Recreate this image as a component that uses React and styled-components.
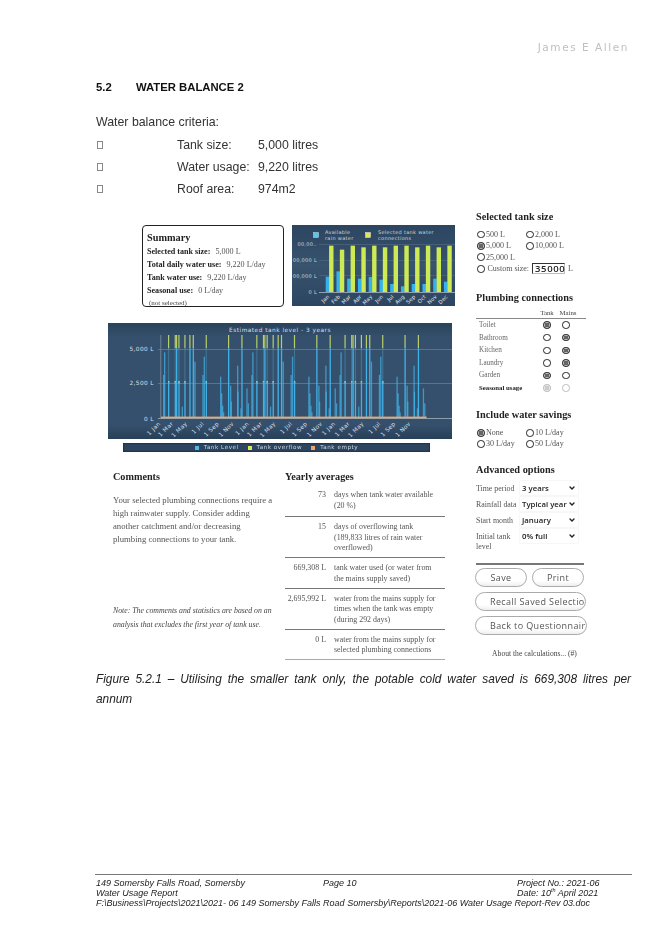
import React from "react";
import styled, { createGlobalStyle } from "styled-components";
import { ChevronDown } from "lucide-react";

const Global = createGlobalStyle`
  html, body { margin: 0; padding: 0; background: #fff; }
  * { box-sizing: border-box; }
`;

const Sheet = styled.div`
  width: 670px; height: 947px; overflow: hidden; background: #fff;
  display: flex; flex-direction: column;
  font-family: "Liberation Sans", Arial, sans-serif; color: #222;
`;
const Brand = styled.header`
  margin-top: 41px; padding-right: 41px; text-align: right;
  font: 10.5px/12px "DejaVu Sans", sans-serif; letter-spacing: 1.55px; color: #c0c0c0;
  filter: blur(.35px);
`;
const Heading = styled.h2`
  margin: 28px 0 0 96px; display: flex; font-size: 11.3px; line-height: 12px; font-weight: 700; color: #111;
  filter: blur(.25px);
  span:first-child { width: 40px; }
`;
const Criteria = styled.p`
  margin: 22px 0 0 96px; font-size: 12.35px; line-height: 14px; color: #333; filter: blur(.25px);
`;
const BulletList = styled.ul`
  list-style: none; margin: 5px 0 0 96px; padding: 0; filter: blur(.25px);
`;
const BulletRow = styled.li`
  height: 22px; display: flex; align-items: center; font-size: 12.3px; color: #333;
`;
const BulletBox = styled.i`
  width: 6px; height: 8px; border: 1px solid #888; margin-left: 1px; margin-right: 74px;
`;
const BulletKey = styled.span`width: 81px;`;

const Figure = styled.section`
  height: 469px; margin-left: 108px; display: grid; grid-template-columns: 368px 120px;
  font-family: "Liberation Serif", "Times New Roman", serif; color: #444;
  filter: blur(.6px);
`;
const LeftCol = styled.div`padding-top: 25px;`;
const TopRow = styled.div`
  margin-left: 34px; height: 84px; display: flex; gap: 8px; align-items: flex-start;
`;
const SummaryCard = styled.div`
  width: 142px; height: 82px; overflow: hidden; border: 1.5px solid #222; border-radius: 4px;
  padding: 4px 0 0 4px; background: #fff;
`;
const SummaryTitle = styled.div`
  font-size: 10.3px; line-height: 15px; font-weight: 700; color: #222;
`;
const SummaryLine = styled.div`
  font-size: 8.1px; line-height: 13px; white-space: nowrap; color: #555;
  b { color: #222; margin-right: 3px; }
`;
const SummaryNote = styled.div`
  font-size: 7px; line-height: 13px; margin-left: 2px; color: #444;
`;
const Svg = styled.svg`display: block; flex: none;`;
const BigChart = styled(Svg)`margin-top: 14px;`;
const Legend = styled.div`
  margin: 4px 0 0 15px; width: 307px; height: 9px; background: #2d4560;
  box-shadow: inset 0 0 2px #111; display: flex; align-items: center; justify-content: center; gap: 9px;
  font: 5.6px/9px "DejaVu Sans", sans-serif; letter-spacing: .55px; color: #d0d8e0;
`;
const LegendItem = styled.span`
  display: flex; align-items: center; gap: 5px;
  &::before { content: ""; width: 4px; height: 4px; background: ${p => p.$color}; }
`;
const Bottom = styled.div`
  margin: 19px 0 0 5px; display: grid; grid-template-columns: 172px 160px;
`;
const Title = styled.h3`
  margin: 0; font-size: 10.2px; line-height: 12px; font-weight: 700; color: #222; white-space: nowrap;
`;
const Para = styled.p`
  margin: 11px 0 0; width: 161px; font-size: 8.7px; line-height: 13px; color: #555;
`;
const Note = styled.p`
  margin: 58px 0 0; font-size: 7.8px; line-height: 14px; font-style: italic; color: #444; white-space: nowrap;
`;
const AvgRows = styled.div`margin-top: 7px;`;
const AvgRow = styled.div`
  display: grid; grid-template-columns: 41px 1fr; column-gap: 8px;
  padding: 5px 0 3.5px; border-bottom: 1px solid #777;
  font-size: 7.9px; line-height: 10.5px; color: #555;
  &:first-child { padding-top: 0; padding-bottom: 5px; }
  &:last-child { border-color: #aaa; }
`;
const AvgValue = styled.div`text-align: right; white-space: nowrap;`;
const AvgText = styled.div`white-space: pre-line;`;

const RightCol = styled.div`padding-top: 11px; margin-left: 0;`;
const SideTitle = styled(Title)`
  font-size: 10.3px; margin-top: ${p => p.$top || 0}px; margin-bottom: ${p => p.$bottom || 0}px;
`;
const RadioGrid = styled.div`
  margin: ${p => p.$top}px 0 0 1px; display: grid; grid-template-columns: 49px auto;
  font-size: 8px; line-height: 11.3px; color: #555;
`;
const RadioLabel = styled.label`display: flex; align-items: center; gap: 1.5px; white-space: nowrap;`;
const Radio = styled.i`
  display: block; flex: none; width: 7.5px; height: 7.5px; border-radius: 50%;
  border: 1px solid ${p => (p.$off ? "#bbb" : "#222")};
  background: ${p => (p.$on ? (p.$off ? "#ccc" : "#666") : "#fff")};
  box-shadow: ${p => (p.$on ? "inset 0 0 0 .5px #fff" : "none")};
`;
const CustomRow = styled.div`
  grid-column: 1 / -1; display: flex; align-items: center; gap: 3px; height: 12px;
`;
const CustomInput = styled.span`
  width: 33px; height: 11px; border: 1px solid #bbb; border-top-color: #333; border-left-color: #333;
  font: 600 9.5px/9px "Open Sans", sans-serif; letter-spacing: .6px; color: #222; padding-left: 2px;
`;
const PlumbHead = styled.div`
  margin-top: 4px; width: 110px; height: 10px; display: grid; grid-template-columns: 61px 20px 22px;
  border-bottom: 1px solid #888; font-size: 6.8px; line-height: 9px; color: #444; text-align: center;
  box-sizing: content-box;
`;
const PlumbRow = styled.div`
  width: 110px; height: 12.55px; display: grid; grid-template-columns: 61px 20px 18px; align-items: center;
  font-size: ${p => (p.$strong ? 6.8 : 7.2)}px; color: ${p => (p.$strong ? "#222" : "#666")};
  font-weight: ${p => (p.$strong ? 700 : 400)};
  span { padding-left: 3px; white-space: nowrap; }
  i { justify-self: center; }
`;
const FormRow = styled.div`
  display: grid; grid-template-columns: 44px 58px; align-items: start; height: ${p => (p.$tall ? 20 : 16)}px;
  font-size: 7.9px; line-height: 10px; color: #555;
  span:first-child { padding-top: 3px; }
`;
const Select = styled.div`
  height: 14px; display: flex; align-items: center; justify-content: space-between; padding: 0 2px;
  font: 600 7.8px/14px "Open Sans", sans-serif; color: #222; white-space: nowrap; box-shadow: 0 0 1px #ccc;
  svg { flex: none; }
`;
const Rule = styled.hr`
  margin: 14px 0 0; width: 108px; height: 2px; border: 0; background: #777;
`;
const ButtonRow = styled.div`
  margin: ${p => p.$top}px 0 0 -1px; width: 109px; display: flex; gap: 5px;
`;
const Btn = styled.div`
  flex: 1; height: 19.5px; white-space: nowrap;
  border: 1px solid #aaa; border-radius: 10px; background: linear-gradient(#fff 70%, #eee);
  font: 9px/18px "Open Sans", sans-serif; letter-spacing: .38px; color: #555;
  text-align: ${p => (p.$wide ? "left" : "center")}; padding-left: ${p => (p.$wide ? "14px" : "0")};
`;
const About = styled.div`
  margin-top: 14px; width: 117px; text-align: center; font-size: 7.6px; line-height: 10px; color: #444; white-space: nowrap;
`;

const Caption = styled.p`
  margin: 0 39px 0 96px; font-size: 11.85px; line-height: 20px; font-style: italic; color: #222; filter: blur(.25px);
`;
const CaptionFull = styled.span`
  display: block; text-align: justify; text-align-last: justify;
`;
const Footer = styled.footer`
  margin: 165px 38px 0 95px; border-top: 1px solid #777; padding: 3px 0 0 1px;
  font-size: 9px; line-height: 10px; font-style: italic; color: #222; filter: blur(.25px);
`;
const FootGrid = styled.div`
  display: grid; grid-template-columns: 227px 194px auto;
  sup { font-size: 5.5px; line-height: 0; }
`;
const FootPath = styled.div`white-space: nowrap;`;

const chartFont = { fontFamily: "DejaVu Sans, sans-serif" };

function TopChart() {
  const months = ["Jan","Feb","Mar","Apr","May","Jun","Jul","Aug","Sep","Oct","Nov","Dec"];
  const blue = [46,62,40,40,45,37,24,17,24,24,40,31];
  const green = [146,158,146,151,146,151,146,146,151,146,151,146];
  return (
    <Svg width="163" height="81" viewBox="0 0 163 81">
      <defs>
        <linearGradient id="tg" x1="0" x2="0" y1="0" y2="1"><stop offset="0" stopColor="#2c4560"/><stop offset=".5" stopColor="#38536e"/><stop offset="1" stopColor="#2c4560"/></linearGradient>
      </defs>
      <rect width="163" height="81" fill="url(#tg)"/>
      <rect x="21.5" y="7.5" width="5" height="5" fill="#5cc4ee" stroke="#cfe" strokeWidth=".4"/>
      <rect x="73.5" y="7.5" width="5" height="5" fill="#dbe85a" stroke="#fff" strokeWidth=".4"/>
      <g {...chartFont} fontSize="5" letterSpacing=".3" fill="#cdd6de">
        <text x="33" y="9">Available</text><text x="33" y="15">rain water</text>
        <text x="86" y="9">Selected tank water</text><text x="86" y="15">connections</text>
        <text x="25" y="21" textAnchor="end">00,00..</text>
        <text x="25" y="37" textAnchor="end">00,000 L</text>
        <text x="25" y="52.5" textAnchor="end">00,000 L</text>
        <text x="25" y="69" textAnchor="end">0 L</text>
      </g>
      {[19.5,35,50.5].map(y => <rect key={y} x="27" y={y} width="136" height=".5" fill="#5c7288"/>)}
      <rect x="27" y="67" width="136" height=".8" fill="#aab6c2"/>
      {months.map((m, i) => {
        const x = 33.7 + i * 10.75;
        const top = green[i] / 3 + 200 - 228;
        return (
          <g key={m}>
            <rect x={x} y={67 - blue[i] / 3} width="3.6" height={blue[i] / 3} fill="#35b2ec"/>
            <rect x={x + 3.4} y={top} width="4.4" height={67 - top} fill="#cdea55"/>
            <text {...chartFont} fontSize="5.2" letterSpacing=".2" fill="#e4e8ec" textAnchor="end" transform={`translate(${x + 4} 72) rotate(-45)`}>{m}</text>
          </g>
        );
      })}
    </Svg>
  );
}

/* one year of the tank series: [offset from the year's start, top of the bar, kind] */
const yearPattern = [
  [6,180],[9,112],[21,200,"capTip"],[41,200,"capTip"],[45,100,"tip"],[52,200,"capTip"],[62,275],[70,200,"capTip"],
  [85,100,"tip"],[95,100,"tip"],[100,140],[124,180],[128,125],[134,200,"capTip"],
  [177,185],[180,235],[183,272],[186,292],[201,100,"tip"],[207,212],[209,260],
  [228,152],[229,230],[238,280],[241,100,"tip"],[256,220],[260,265],
];
const tickLabels = [210,248,290,340,385,430,475,515,555,605,650,695,735,778,820,870,915,960];
const tickNames = ["1 Jan","1 Mar","1 May","1 Jul","1 Sep","1 Nov"];

function BigLevelChart() {
  const zx = z => z / 3 - 18;
  const zy = z => z / 3 - 8;
  const bars = [];
  [0, 264.7, 529.4].forEach((off, yi) => {
    yearPattern.forEach(([dx, top, kind], i) => {
      const z = 213 + dx + off;
      if (z > 1010) return;
      const x = zx(z);
      if (kind) bars.push(<rect key={`t${yi}${i}`} x={x} y={zy(60)} width="1.2" height={40 / 3} fill="#c5dc6a" opacity=".9"/>);
      if (kind === "capTip") {
        bars.push(<rect key={`m${yi}${i}`} x={x} y={zy(100)} width="1.2" height={100 / 3} fill="#4a9cc6" opacity=".45"/>);
        bars.push(<rect key={`c${yi}${i}`} x={x} y={zy(198)} width="1.3" height="2.6" fill="#d4e56a"/>);
      }
      bars.push(<rect key={`b${yi}${i}`} x={x} y={zy(top)} width="1.3" height={(308 - top) / 3} fill="#41b6ee" opacity={kind ? 0.95 : 0.7}/>);
    });
  });
  return (
    <BigChart width="344" height="116" viewBox="0 0 344 116">
      <defs>
        <linearGradient id="bg" x1="0" x2="0" y1="0" y2="1"><stop offset="0" stopColor="#2a425c"/><stop offset=".12" stopColor="#35506c"/><stop offset=".88" stopColor="#35506c"/><stop offset="1" stopColor="#283f58"/></linearGradient>
      </defs>
      <rect width="344" height="116" fill="url(#bg)"/>
      <text {...chartFont} x="172" y="8.5" fontSize="5.8" letterSpacing=".5" textAnchor="middle" fill="#d8dfe6">Estimated tank level - 3 years</text>
      <rect x="52.5" y="12" width=".7" height="83" fill="#8b9aa8"/>
      {[26, 60].map(y => <rect key={y} x="50" y={y} width="294" height=".7" fill="#6f8396"/>)}
      <rect x="50" y="95" width="294" height=".9" fill="#9aa7b3"/>
      {bars}
      <rect x={zx(213)} y="93.6" width={(1010 - 213) / 3} height="1.6" fill="#f0a468"/>
      <g {...chartFont} fontSize="5.8" letterSpacing=".4" fill="#d8dfe6" textAnchor="end">
        <text x="46" y="28">5,000 L</text>
        <text x="46" y="62">2,500 L</text>
        <text x="46" y="97.5">0 L</text>
        {tickLabels.map((z, i) => (
          <text key={z} transform={`translate(${zx(z + 3)} 101) rotate(-45)`}>{tickNames[i % 6]}</text>
        ))}
      </g>
    </BigChart>
  );
}

const plumbing = [
  ["Toilet", true], ["Bathroom", false], ["Kitchen", false], ["Laundry", false], ["Garden", true],
];

const averages = [
  ["73", "days when tank water available\n(20 %)"],
  ["15", "days of overflowing tank\n(189,833 litres of rain water\noverflowed)"],
  ["669,308 L", "tank water used (or water from\nthe mains supply saved)"],
  ["2,695,992 L", "water from the mains supply for\ntimes when the tank was empty\n(during 292 days)"],
  ["0 L", "water from the mains supply for\nselected plumbing connections"],
];

const selects = [
  ["Time period", "3 years"], ["Rainfall data", "Typical year"], ["Start month", "January"],
];

export default function App() {
  return (
    <Sheet>
      <Global />
      <Brand>James E Allen</Brand>
      <Heading><span>5.2</span><span>WATER BALANCE 2</span></Heading>
      <Criteria>Water balance criteria:</Criteria>
      <BulletList>
        <BulletRow><BulletBox /><BulletKey>Tank size:</BulletKey>5,000 litres</BulletRow>
        <BulletRow><BulletBox /><BulletKey>Water usage:</BulletKey>9,220 litres</BulletRow>
        <BulletRow><BulletBox /><BulletKey>Roof area:</BulletKey>974m2</BulletRow>
      </BulletList>
      <Figure>
        <LeftCol>
          <TopRow>
            <SummaryCard>
              <SummaryTitle>Summary</SummaryTitle>
              <SummaryLine><b>Selected tank size:</b> 5,000 L</SummaryLine>
              <SummaryLine><b>Total daily water use:</b> 9,220 L/day</SummaryLine>
              <SummaryLine><b>Tank water use:</b> 9,220 L/day</SummaryLine>
              <SummaryLine><b>Seasonal use:</b> 0 L/day</SummaryLine>
              <SummaryNote>(not selected)</SummaryNote>
            </SummaryCard>
            <TopChart />
          </TopRow>
          <BigLevelChart />
          <Legend>
            <LegendItem $color="#4fb8ea">Tank Level</LegendItem>
            <LegendItem $color="#dbe85a">Tank overflow</LegendItem>
            <LegendItem $color="#f0a468">Tank empty</LegendItem>
          </Legend>
          <Bottom>
            <div>
              <Title>Comments</Title>
              <Para>Your selected plumbing connections require a high rainwater supply. Consider adding another catchment and/or decreasing plumbing connections to your tank.</Para>
              <Note>Note: The comments and statistics are based on an<br />analysis that excludes the first year of tank use.</Note>
            </div>
            <div>
              <Title>Yearly averages</Title>
              <AvgRows>
                {averages.map(([v, d]) => (
                  <AvgRow key={v}><AvgValue>{v}</AvgValue><AvgText>{d}</AvgText></AvgRow>
                ))}
              </AvgRows>
            </div>
          </Bottom>
        </LeftCol>
        <RightCol>
          <SideTitle>Selected tank size</SideTitle>
          <RadioGrid $top={6}>
            <RadioLabel><Radio />500 L</RadioLabel>
            <RadioLabel><Radio />2,000 L</RadioLabel>
            <RadioLabel><Radio $on />5,000 L</RadioLabel>
            <RadioLabel><Radio />10,000 L</RadioLabel>
            <RadioLabel><Radio />25,000 L</RadioLabel>
            <span />
            <CustomRow><Radio />Custom size: <CustomInput>35000</CustomInput> L</CustomRow>
          </RadioGrid>
          <SideTitle $top={17}>Plumbing connections</SideTitle>
          <PlumbHead><span /><span>Tank</span><span>Mains</span></PlumbHead>
          {plumbing.map(([name, tank]) => (
            <PlumbRow key={name}><span>{name}</span><Radio $on={tank} /><Radio $on={!tank} /></PlumbRow>
          ))}
          <PlumbRow $strong><span>Seasonal usage</span><Radio $on $off /><Radio $off /></PlumbRow>
          <SideTitle $top={15}>Include water savings</SideTitle>
          <RadioGrid $top={6}>
            <RadioLabel><Radio $on />None</RadioLabel>
            <RadioLabel><Radio />10 L/day</RadioLabel>
            <RadioLabel><Radio />30 L/day</RadioLabel>
            <RadioLabel><Radio />50 L/day</RadioLabel>
          </RadioGrid>
          <SideTitle $top={14} $bottom={5}>Advanced options</SideTitle>
          {selects.map(([l, v]) => (
            <FormRow key={l}><span>{l}</span><Select>{v}<ChevronDown size={8} strokeWidth={4} /></Select></FormRow>
          ))}
          <FormRow $tall><span>Initial tank level</span><Select>0% full<ChevronDown size={8} strokeWidth={4} /></Select></FormRow>
          <Rule />
          <ButtonRow $top={3}><Btn>Save</Btn><Btn>Print</Btn></ButtonRow>
          <ButtonRow $top={4.5}><Btn $wide>Recall Saved Selectio</Btn></ButtonRow>
          <ButtonRow $top={4.5}><Btn $wide>Back to Questionnair</Btn></ButtonRow>
          <About>About the calculations... (#)</About>
        </RightCol>
      </Figure>
      <Caption>
        <CaptionFull>Figure 5.2.1 – Utilising the smaller tank only, the potable cold water saved is 669,308 litres per</CaptionFull>
        annum
      </Caption>
      <Footer>
        <FootGrid>
          <div>149 Somersby Falls Road, Somersby</div>
          <div>Page 10</div>
          <div>Project No.: 2021-06</div>
          <div>Water Usage Report</div>
          <div />
          <div>Date: 10<sup>th</sup> April 2021</div>
        </FootGrid>
        <FootPath>F:\Business\Projects\2021\2021- 06 149 Somersby Falls Road Somersby\Reports\2021-06 Water Usage Report-Rev 03.doc</FootPath>
      </Footer>
    </Sheet>
  );
}
